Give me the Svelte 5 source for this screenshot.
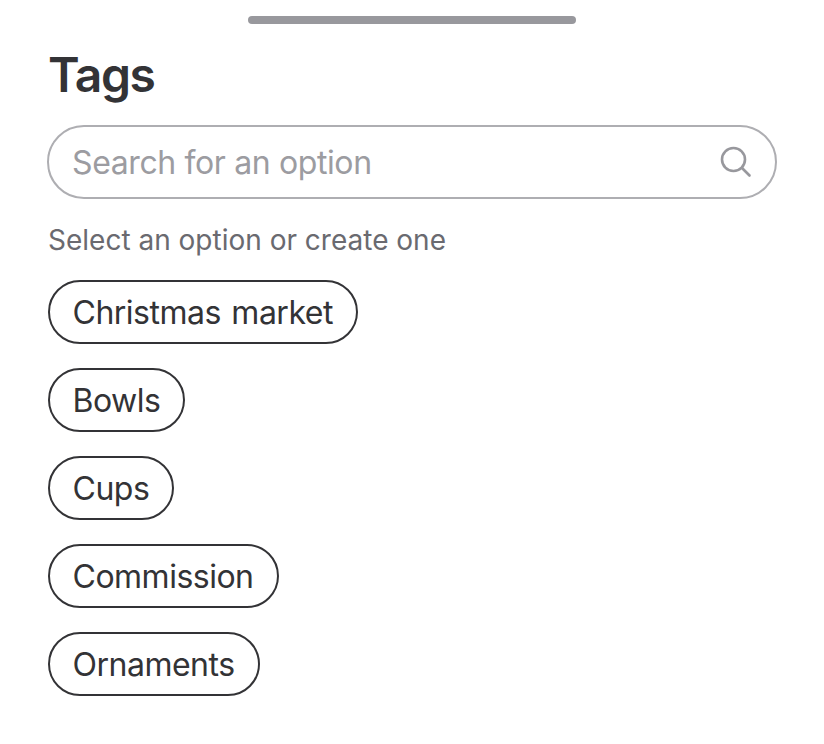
<script lang="ts">
	const options = ['Christmas market', 'Bowls', 'Cups', 'Commission', 'Ornaments'];
</script>

<main>
	<div class="handle"></div>
	<h1>Tags</h1>

	<label class="search">
		<input type="text" placeholder="Search for an option" />
		<svg width="36" height="36" viewBox="0 0 36 36" fill="none" aria-hidden="true">
			<circle cx="15.5" cy="15.5" r="11.5" />
			<path d="M24 24L31.5 31.5" />
		</svg>
	</label>

	<p class="hint">Select an option or create one</p>

	<ul>
		{#each options as option}
			<li><button type="button">{option}</button></li>
		{/each}
	</ul>
</main>

<style>
	:global(body) {
		background: #fff;
	}

	main {
		width: 824px;
		height: 744px;
		box-sizing: border-box;
		padding: 16px 47px 0;
		font-family: Inter, sans-serif;
		color: #333336;
		overflow: hidden;
	}

	.handle {
		width: 328px;
		height: 8px;
		margin: 0 auto;
		border-radius: 4px;
		background: #98989d;
	}

	h1 {
		margin: 22px 0 0 1px;
		font-size: 48px;
		line-height: 58px;
		font-weight: 600;
		letter-spacing: -1.4px;
	}

	.search {
		display: flex;
		align-items: center;
		height: 74px;
		box-sizing: border-box;
		margin-top: 21px;
		padding: 0 21px 0 23px;
		border: 2px solid #aeaeb2;
		border-radius: 37px;
	}

	input {
		flex: 1;
		min-width: 0;
		padding: 2px 0 0;
		border: 0;
		outline: 0;
		background: none;
		font: 400 32px/40px Inter, sans-serif;
		letter-spacing: -0.38px;
		color: #333336;
	}

	input::placeholder {
		color: #9c9ca1;
		opacity: 1;
	}

	svg {
		stroke: #98989d;
		stroke-width: 2.6;
		stroke-linecap: round;
	}

	.hint {
		margin: 23px 0 0 1px;
		font-size: 28px;
		line-height: 36px;
		color: #6a6a70;
	}

	ul {
		display: flex;
		flex-direction: column;
		align-items: flex-start;
		gap: 24px;
		margin: 22px 0 0 1px;
		padding: 0;
		list-style: none;
	}

	li {
		display: flex;
	}

	button {
		height: 64px;
		padding: 2px 23px 0 22.5px;
		border: 2px solid #333336;
		border-radius: 32px;
		background: #fff;
		font: 400 32px/40px Inter, sans-serif;
		letter-spacing: -0.5px;
		word-spacing: 2px;
		color: #333336;
	}
</style>
